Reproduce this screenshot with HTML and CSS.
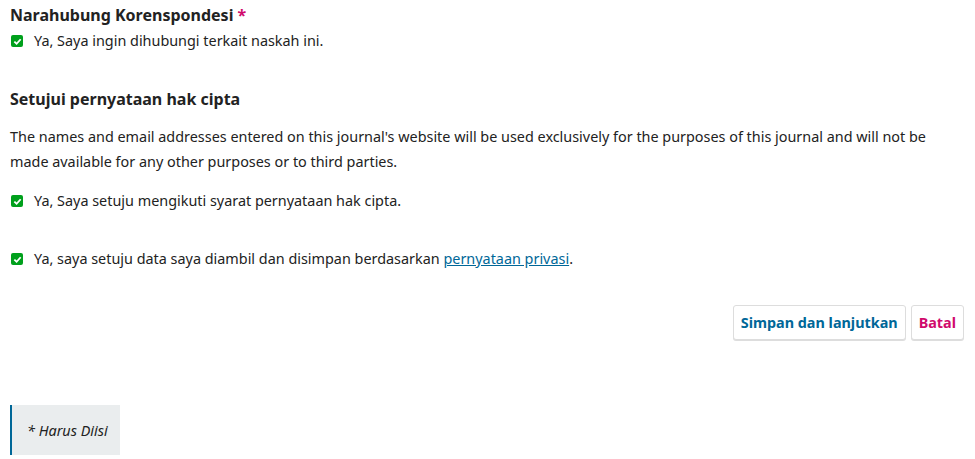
FILE: index.html
```html
<!DOCTYPE html>
<html>
<head>
<meta charset="utf-8">
<link rel="stylesheet" href="styles.css">
</head>
<body>
<div class="page">
  <section class="field">
    <h3 class="label">Narahubung Korenspondesi <span class="req">*</span></h3>
    <div class="check-row tight">
      <span class="box"><svg viewBox="0 0 12 12" width="9" height="9"><path d="M1.8 6.2 L4.8 9 L10.2 3" fill="none" stroke="#fff" stroke-width="2.4"/></svg></span>
      <span>Ya, Saya ingin dihubungi terkait naskah ini.</span>
    </div>
  </section>

  <section class="field copyright">
    <h3 class="label">Setujui pernyataan hak cipta</h3>
    <p class="desc">The names and email addresses entered on this journal's website will be used exclusively for the purposes of this journal and will not be made available for any other purposes or to third parties.</p>
    <div class="check-row first">
      <span class="box"><svg viewBox="0 0 12 12" width="9" height="9"><path d="M1.8 6.2 L4.8 9 L10.2 3" fill="none" stroke="#fff" stroke-width="2.4"/></svg></span>
      <span>Ya, Saya setuju mengikuti syarat pernyataan hak cipta.</span>
    </div>
    <div class="check-row privacy">
      <span class="box"><svg viewBox="0 0 12 12" width="9" height="9"><path d="M1.8 6.2 L4.8 9 L10.2 3" fill="none" stroke="#fff" stroke-width="2.4"/></svg></span>
      <span>Ya, saya setuju data saya diambil dan disimpan berdasarkan <a href="#" class="link">pernyataan privasi</a>.</span>
    </div>
  </section>

  <div class="buttons">
    <button class="btn primary">Simpan dan lanjutkan</button>
    <button class="btn cancel">Batal</button>
  </div>

  <div class="required-note">* Harus Diisi</div>
</div>
</body>
</html>
```
FILE: styles.css
```css
html, body {
  margin: 0;
  padding: 0;
  background: #fff;
}
body {
  font-family: "Noto Sans", "Open Sans", sans-serif;
  font-size: 14.4px;
  color: #222;
}
.page {
  padding: 0 11px 0 10px;
}
.field {
  margin: 0;
}
.label {
  margin: 0;
  font-size: 16px;
  font-weight: 700;
  line-height: 20px;
  padding-top: 5px;
  color: #222;
}
.req {
  color: #d00a6c;
}
.check-row {
  display: flex;
  align-items: center;
  gap: 10px;
  line-height: 20px;
}
.check-row.tight {
  margin-top: 6px;
}
.check-row.first {
  margin-top: 17px;
}
.box {
  width: 12px;
  height: 12px;
  border-radius: 2px;
  background: #00a01c;
  display: flex;
  align-items: center;
  justify-content: center;
  margin-left: 1px;
  margin-right: 1px;
  flex: none;
}
.copyright {
  margin-top: 33px;
}
.desc {
  margin: 15px 0 0;
  line-height: 25px;
}
.check-row.privacy {
  margin-top: 38px;
}
.link {
  color: #006798;
}
.buttons {
  display: flex;
  justify-content: flex-end;
  gap: 5px;
  margin-top: 36px;
}
.btn {
  font-family: "Noto Sans", "Open Sans", sans-serif;
  font-size: 14.4px;
  font-weight: 700;
  height: 35px;
  padding: 0 7px;
  background: #fff;
  border: 1px solid #ddd;
  border-radius: 3px;
  box-shadow: 0 1px 0 #ddd;
}
.primary {
  color: #006798;
}
.cancel {
  color: #d00a6c;
}
.required-note {
  margin-top: 65px;
  width: 110px;
  box-sizing: border-box;
  height: 50px;
  display: flex;
  align-items: center;
  padding-left: 15px;
  background: #eaedee;
  border-left: 2px solid #006798;
  font-style: italic;
}
```
